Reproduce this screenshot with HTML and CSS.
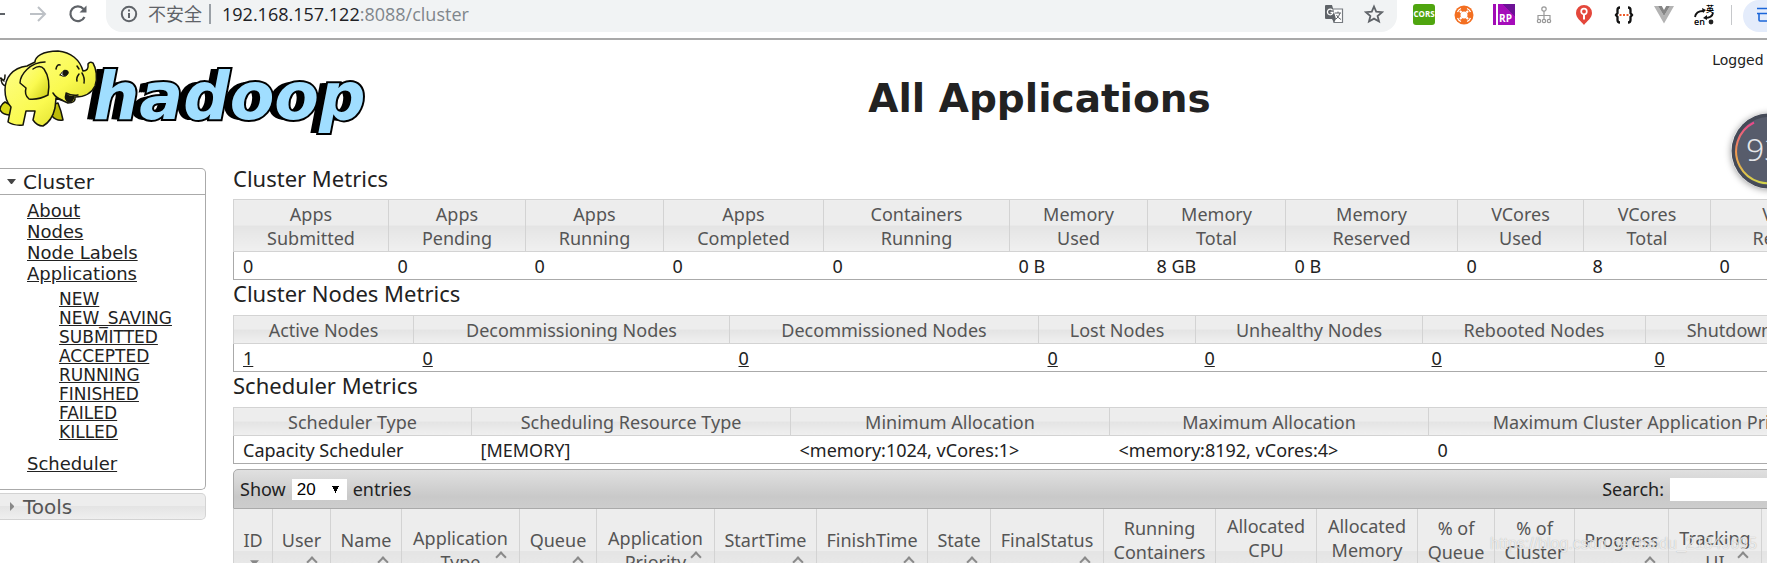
FILE: index.html
```html
<!DOCTYPE html>
<html lang="en">
<head>
<meta charset="utf-8">
<title>All Applications</title>
<link rel="stylesheet" href="styles.css">
</head>
<body>
<header class="toolbar">
  <button class="tool" aria-label="Back"><svg width="22" height="22" viewBox="0 0 22 22" fill="none" stroke="#5f6368" stroke-width="2"><path d="M19 11H4M11 4L4 11L11 18"/></svg></button>
  <button class="tool" aria-label="Forward"><svg width="22" height="22" viewBox="0 0 22 22" fill="none" stroke="#bdc1c6" stroke-width="2"><path d="M3 11H18M11 4L18 11L11 18"/></svg></button>
  <button class="tool" aria-label="Reload"><svg width="22" height="22" viewBox="0 0 22 22"><path d="M17.500 14A7.400 7.400 0 1 1 16.500 6" fill="none" stroke="#5f6368" stroke-width="2.200"/><path d="M19.500 2.500V9.500H12.500z" fill="#5f6368"/></svg></button>
  <div class="omnibox">
    <svg width="18" height="18" viewBox="0 0 18 18"><circle cx="9" cy="9" r="7.200" fill="none" stroke="#5f6368" stroke-width="2"/><path d="M9 8V13M9 4.500V6.500" stroke="#5f6368" stroke-width="2"/></svg>
    <span class="unsafe">不安全</span>
    <span class="divider"></span>
    <span class="url">192.168.157.122<span class="path">:8088/cluster</span></span>
    <svg class="translate" width="20" height="20" viewBox="0 0 20 20"><path d="M8 5H18.500V18.500H10z" fill="#fff" stroke="#777b80" stroke-width="1.200"/><path d="M2 1H8L12 15H2Q1 15 1 14V2Q1 1 2 1z" fill="#5f6368"/><path d="M8 15H12L10 18.500z" fill="#5f6368"/><path d="M8.500 6.300A2.800 2.800 0 1 0 9 8.500H6.500" fill="none" stroke="#fff" stroke-width="1.300"/><path d="M11 9H17M14 7.500V9M16 9Q15 13 12 15M12.500 11Q14 14 17 15.500" fill="none" stroke="#5f6368" stroke-width="1"/></svg>
    <svg width="20" height="20" viewBox="0 0 20 20"><path d="M10 2.500L12.200 7.700L18 8.200L13.600 12L15 17.500L10 14.600L5 17.500L6.400 12L2 8.200L7.800 7.700z" fill="none" stroke="#5f6368" stroke-width="1.800"/></svg>
  </div>
  <div class="extensions">
    <span class="cors">CORS</span>
    <svg width="22" height="22" viewBox="0 0 22 22"><circle cx="11" cy="11" r="9.500" fill="#f36f21"/><circle cx="11" cy="11" r="3.500" fill="#fff"/><path d="M4.500 8Q5.500 5.500 8 4.500M14 4.500Q16.500 5.500 17.500 8M17.500 14Q16.500 16.500 14 17.500M8 17.500Q5.500 16.500 4.500 14" stroke="#fff" stroke-width="1.300" fill="none"/><path d="M7 7L8.500 8.500M15 7L13.500 8.500M15 15L13.500 13.500M7 15L8.500 13.500" stroke="#fff" stroke-width="2.200"/></svg>
    <span class="rp">RP</span>
    <svg width="22" height="22" viewBox="0 0 22 22" fill="none" stroke="#999" stroke-width="1.200"><circle cx="11" cy="5" r="2.200"/><path d="M11 7V15M5 15V11.500H17V15"/><circle cx="6" cy="17" r="1.700"/><circle cx="11" cy="17" r="1.700"/><circle cx="16" cy="17" r="1.700"/></svg>
    <svg width="22" height="22" viewBox="0 0 22 22"><path d="M11 1A8 8 0 0 1 19 9C19 14 14 17 11 21C8 17 3 14 3 9A8 8 0 0 1 11 1z" fill="#e4473b"/><circle cx="11" cy="7.500" r="2.800" fill="none" stroke="#fff" stroke-width="1.700"/><path d="M11 10V15.500" stroke="#fff" stroke-width="2"/></svg>
    <svg width="22" height="22" viewBox="0 0 22 22"><path d="M7 3.500Q4.500 3.500 4.500 6V9L3 11L4.500 13V16Q4.500 18.500 7 18.500M15 3.500Q17.500 3.500 17.500 6V9L19 11L17.500 13V16Q17.500 18.500 15 18.500" fill="none" stroke="#111" stroke-width="2.300"/><path d="M6.500 11H16" stroke="#f05a28" stroke-width="2" stroke-dasharray="2 1.500"/></svg>
    <svg width="22" height="22" viewBox="0 0 22 22"><path d="M1 2H5L11 12L17 2H21L11 19.500z" fill="#b3b3b3"/><path d="M5 2H8.800L11 6L13.200 2H17L11 12z" fill="#858585"/></svg>
    <svg width="22" height="22" viewBox="0 0 22 22"><path d="M2 13Q3 7 10 7M20 9Q19 14 12 14" fill="none" stroke="#111" stroke-width="1.800"/><path d="M9 4L13 6L10 9zM14 11L10 14L14 16z" fill="#111"/><text x="1" y="21" font-family="Open Sans, sans-serif" font-size="9" font-weight="600">en</text><text x="13" y="8" font-family="Noto Sans CJK SC, sans-serif" font-size="8" font-weight="700">英</text><circle cx="18" cy="18" r="2.400" fill="#222"/></svg>
  </div>
  <span class="separator"></span>
  <button class="profile" aria-label="Profile"><svg width="22" height="22" viewBox="0 0 22 22"><path d="M22 3.500H2M2 8.500H22M4 8V15Q4 16 5 16H22" fill="none" stroke="#1a66d9" stroke-width="1.600"/></svg></button>
</header>

<div class="page">
  <div class="banner">
    <a class="logo" href="#" aria-label="hadoop">
      <svg class="elephant" width="98" height="80" viewBox="0 0 98 80" stroke="#16160c" stroke-width="1.500" stroke-linejoin="round" stroke-linecap="round">
        <defs><linearGradient id="hide" x1="0" y1="0" x2="1" y2="1"><stop offset="0" stop-color="#ffff91"/><stop offset=".55" stop-color="#fafa50"/><stop offset="1" stop-color="#cccb13"/></linearGradient></defs>
        <path d="M6 37Q1 36 1 29Q5 34 5 26M0 29L4 32" fill="none"/>
        <path d="M5 53Q0 56 0 61Q3 66 9 66L14 58z" fill="#d9d817"/>
        <path d="M51 56Q55 62 52 67Q56 72 63 71Q61 61 58 54z" fill="#bdbb08"/>
        <path d="M27 17C12 19 5 29 5 41C5 49 7 54 11 58L8 73Q14 77 23 76L26 62H35L33 71Q37 77 43 77Q52 72 55 59L56 49Q64 52 68 54Q76 54 75 48Q90 48 95 37C98 29 96 19 93 14Q90 12 88 15Q89 22 83 22C80 11 71 3 58 2C42 2 35 8 35 13z" fill="url(#hide)"/>
        <path d="M45 13C30 13 20 26 20 34L26 39Q24 46 29 50Q39 51 48 46Q51 30 44 20Q40 15 33 20" fill="url(#hide)"/>
        <path d="M53 44Q56 49 62 51M56 20Q57 15 60 16M82 24Q85 29 84 34M79 25Q76 29 77 32M79 20L77 17M66 44Q72 47 78 46" fill="none"/>
        <path d="M60 26Q65 18 68 23Q67 30 60 26" fill="#fff" stroke-width="1"/><path d="M64 22Q68 21 68 24Q65 28 63 25zM66 45Q70 49 74 47Q73 53 69 53Q64 51 66 45" fill="#16160c"/>
      </svg>
      <span class="wordmark">hadoop</span>
    </a>
    <h1>All Applications</h1>
    <div class="login">Logged in as: dr.who</div>
  </div>

  <div class="columns">
    <nav class="sidebar">
      <h3 class="section open"><svg width="10" height="10" viewBox="0 0 10 10"><path d="M0 2H9L5 7H4z" fill="#454545"/></svg><a href="#">Cluster</a></h3>
      <div class="menu">
        <ul>
          <li><a href="#">About</a></li>
          <li><a href="#">Nodes</a></li>
          <li><a href="#">Node Labels</a></li>
          <li><a href="#">Applications</a>
            <ul class="states">
              <li><a href="#">NEW</a></li>
              <li><a href="#">NEW_SAVING</a></li>
              <li><a href="#">SUBMITTED</a></li>
              <li><a href="#">ACCEPTED</a></li>
              <li><a href="#">RUNNING</a></li>
              <li><a href="#">FINISHED</a></li>
              <li><a href="#">FAILED</a></li>
              <li><a href="#">KILLED</a></li>
            </ul>
          </li>
          <li><a href="#">Scheduler</a></li>
        </ul>
      </div>
      <h3 class="section closed"><svg width="10" height="10" viewBox="0 0 10 10"><path d="M3 0L7 4V5L3 9z" fill="#888"/></svg><a href="#">Tools</a></h3>
    </nav>

    <main>
      <h2>Cluster Metrics</h2>
      <table class="metrics cluster">
        <colgroup><col><col><col><col><col><col><col><col><col><col><col></colgroup>
        <thead><tr><th>Apps<br>Submitted</th><th>Apps<br>Pending</th><th>Apps<br>Running</th><th>Apps<br>Completed</th><th>Containers<br>Running</th><th>Memory<br>Used</th><th>Memory<br>Total</th><th>Memory<br>Reserved</th><th>VCores<br>Used</th><th>VCores<br>Total</th><th>VCores<br>Reserved</th></tr></thead>
        <tbody><tr><td>0</td><td>0</td><td>0</td><td>0</td><td>0</td><td>0 B</td><td>8 GB</td><td>0 B</td><td>0</td><td>8</td><td>0</td></tr></tbody>
      </table>
      <h2>Cluster Nodes Metrics</h2>
      <table class="metrics nodes">
        <colgroup><col><col><col><col><col><col><col></colgroup>
        <thead><tr><th>Active Nodes</th><th>Decommissioning Nodes</th><th>Decommissioned Nodes</th><th>Lost Nodes</th><th>Unhealthy Nodes</th><th>Rebooted Nodes</th><th>Shutdown Nodes</th></tr></thead>
        <tbody><tr><td><a href="#">1</a></td><td><a href="#">0</a></td><td><a href="#">0</a></td><td><a href="#">0</a></td><td><a href="#">0</a></td><td><a href="#">0</a></td><td><a href="#">0</a></td></tr></tbody>
      </table>
      <h2>Scheduler Metrics</h2>
      <table class="metrics scheduler">
        <colgroup><col><col><col><col><col></colgroup>
        <thead><tr><th>Scheduler Type</th><th>Scheduling Resource Type</th><th>Minimum Allocation</th><th>Maximum Allocation</th><th>Maximum Cluster Application Priority</th></tr></thead>
        <tbody><tr><td>Capacity Scheduler</td><td>[MEMORY]</td><td>&lt;memory:1024, vCores:1&gt;</td><td>&lt;memory:8192, vCores:4&gt;</td><td>0</td></tr></tbody>
      </table>

      <div class="controls">
        <label>Show <select><option>10</option><option selected>20</option><option>50</option></select> entries</label>
        <label class="search">Search: <input type="text"></label>
      </div>
      <table class="apps">
        <colgroup><col><col><col><col><col><col><col><col><col><col><col><col><col><col><col><col><col><col></colgroup>
        <thead><tr>
          <th>ID<i class="sort down"></i></th>
          <th>User<i class="sort"></i></th>
          <th>Name<i class="sort"></i></th>
          <th class="wrap">Application<br>Type<i class="sort"></i></th>
          <th>Queue<i class="sort"></i></th>
          <th class="wrap">Application<br>Priority<i class="sort"></i></th>
          <th>StartTime<i class="sort"></i></th>
          <th>FinishTime<i class="sort"></i></th>
          <th>State<i class="sort"></i></th>
          <th>FinalStatus<i class="sort"></i></th>
          <th>Running<br>Containers<i class="sort"></i></th>
          <th>Allocated<br>CPU<br>VCores</th>
          <th>Allocated<br>Memory<br>MB</th>
          <th>% of<br>Queue<i class="sort"></i></th>
          <th>% of<br>Cluster<i class="sort"></i></th>
          <th>Progress<i class="sort"></i></th>
          <th class="wrap">Tracking<br>UI<i class="sort"></i></th>
          <th>Blacklisted<br>Nodes<i class="sort"></i></th>
        </tr></thead>
      </table>
    </main>
  </div>
</div>

<div class="gauge"><svg width="76" height="76" viewBox="0 0 76 76"><defs><linearGradient id="ring" x1="0" y1="0" x2="0" y2="1"><stop offset="0" stop-color="#e8478b"/><stop offset=".5" stop-color="#f39b50"/><stop offset="1" stop-color="#d3d44a"/></linearGradient></defs><circle cx="38" cy="38" r="37.500" fill="#454a57"/><circle cx="38" cy="38" r="34" fill="#575c6b"/><path d="M23 9.500A32 32 0 1 0 53 66" fill="none" stroke="url(#ring)" stroke-width="2"/></svg><span>93</span></div>
<div class="watermark">https://blog.csdn.net/baidu_21849695</div>
</body>
</html>
```
FILE: styles.css
```css
* { box-sizing: border-box; }
html, body { height: 100%; }
body {
  margin: 0;
  position: relative;
  overflow: hidden;
  background: #fff;
  color: #222;
  font-family: "Noto Sans", "Noto Sans CJK SC", sans-serif;
  font-size: 18px;
  line-height: 24px;
}
a { color: inherit; }
button { border: 0; padding: 0; background: none; }
svg { display: block; flex: none; }

/* browser toolbar */
.toolbar {
  display: flex;
  align-items: flex-start;
  height: 40px;
  border-bottom: 2px solid #a9a9a9;
  font-family: "Open Sans", "Noto Sans CJK SC", sans-serif;
}
.tool { width: 40px; height: 28px; flex: none; display: grid; place-items: center; }
.tool:first-child { width: 18px; justify-content: end; padding-right: 10px; }
.tool:nth-child(3) { margin-right: 8px; }
.omnibox {
  flex: 1;
  height: 32px;
  padding: 0 13px 4px 14px;
  display: flex;
  align-items: center;
  background: #f1f3f4;
  border-radius: 0 0 16px 16px;
}
.unsafe { margin-left: 10px; color: #5f6368; white-space: nowrap; }
.divider { width: 2px; height: 20px; margin: 0 11px 0 7px; background: #9aa0a6; }
.url { flex: 1; color: #202124; }
.path { color: #80868b; }
.translate { margin-right: 20px; }
.extensions { display: flex; align-items: center; gap: 18px; height: 29px; margin-left: 16px; }
.cors, .rp {
  width: 22px;
  height: 21px;
  color: #fff;
  font-size: 8px;
  font-weight: 700;
  line-height: 20px;
  text-align: center;
  background: #4fa50f;
  border-radius: 3px;
}
.rp {
  padding: 4px 0 0 3px;
  font-size: 10px;
  border-radius: 0;
  background: linear-gradient(90deg, #a10cb5 3px, #fff 3px, #fff 5px, transparent 5px), linear-gradient(225deg, #6d1296 30%, #a50cba 30%);
}
.separator { width: 1px; height: 20px; margin: 5px 11px 0 16px; background: #c6c8cb; }
.profile { width: 24px; height: 32px; padding-left: 12px; background: #e4ecfb; border-radius: 16px 0 0 16px; overflow: hidden; }

/* page, wider than the window */
.page { width: 106%; }
.banner, .columns { display: grid; grid-template-columns: 206px minmax(0, 1fr); align-items: start; }
.banner { height: 128px; }
.columns { column-gap: 27px; }
.logo { display: flex; width: max-content; padding-top: 9px; color: #a0deff; text-decoration: none; }
.elephant { position: relative; z-index: 1; }
.wordmark {
  margin-left: -5px;
  font: italic bold 65px/96px "DejaVu Sans", sans-serif;
  -webkit-text-stroke: 4px #000;
  paint-order: stroke fill;
  text-shadow: -2px 0 #000, -4px 0 #000, -6px 0 #000, -8px 0 #000;
}
h1, .login { grid-area: 1 / 2; }
h1 { margin: 0; padding-top: 35px; text-align: center; font: bold 39px/48px Verdana, "DejaVu Sans", sans-serif; }
.login { padding: 10px 16px 0 0; text-align: right; font: 14px/20px Verdana, "DejaVu Sans", sans-serif; }

/* sidebar */
.sidebar { font-family: Verdana, "DejaVu Sans", sans-serif; }
.section {
  display: flex;
  align-items: center;
  gap: 6px;
  height: 27px;
  margin: 0;
  padding-left: 7px;
  border: 1px solid #aaa;
  border-left: 0;
  border-radius: 0 5px 0 0;
  font-size: 20px;
  font-weight: 400;
}
.section a { text-decoration: none; }
.closed {
  margin-top: 3px;
  color: #555;
  border-color: #d3d3d3;
  border-radius: 0 5px 5px 0;
  background: linear-gradient(#ededed 50%, #e4e4e4 50%, #efefef);
}
.menu { padding: 5px 0 15px 27px; border: 1px solid #aaa; border-width: 0 1px 1px 0; border-radius: 0 0 5px 0; }
.menu ul { margin: 0; padding: 0; list-style: none; font-size: 18px; line-height: 21px; }
.menu .states { padding: 6px 0 11px 32px; font-size: 17px; line-height: 19px; }

/* tables */
main { overflow: hidden; }
h2 { margin: 0; height: 35px; font-size: 22px; font-weight: 400; line-height: 26px; }
h2:first-child { height: 31px; line-height: 20px; }
table { width: 100%; table-layout: fixed; border-collapse: collapse; }
th {
  padding: 2px 0 1px;
  font-weight: 400;
  color: #555;
  border: 1px solid #d3d3d3;
  background: linear-gradient(#ededed 50%, #e4e4e4 50%, #f0f0f0);
}
td { padding: 2px 9px 1px; }
.metrics tbody { border: 1px solid #aaa; border-top-color: #d3d3d3; }

.cluster col:nth-child(1) { width: 155px; }
.cluster col:nth-child(2) { width: 137px; }
.cluster col:nth-child(3) { width: 138px; }
.cluster col:nth-child(4) { width: 160px; }
.cluster col:nth-child(5) { width: 186px; }
.cluster col:nth-child(6) { width: 138px; }
.cluster col:nth-child(7) { width: 138px; }
.cluster col:nth-child(8) { width: 172px; }
.cluster col:nth-child(9) { width: 126px; }
.cluster col:nth-child(10) { width: 127px; }

.nodes col:nth-child(1) { width: 180px; }
.nodes col:nth-child(2) { width: 316px; }
.nodes col:nth-child(3) { width: 309px; }
.nodes col:nth-child(4) { width: 157px; }
.nodes col:nth-child(5) { width: 227px; }
.nodes col:nth-child(6) { width: 223px; }

.scheduler col:nth-child(1) { width: 238px; }
.scheduler col:nth-child(n+2) { width: 319px; }
.scheduler col:nth-child(5) { width: auto; }

/* application list */
.controls {
  display: flex;
  justify-content: space-between;
  align-items: center;
  height: 40px;
  margin-top: 5px;
  padding: 0 6px;
  border: 1px solid #aaa;
  border-radius: 5px 5px 0 0;
  background: linear-gradient(#e0e0e0, #c9c9c9 70%, #cdcdcd);
}
.controls label { display: flex; align-items: center; gap: 6px; }
select {
  appearance: none;
  width: 55px;
  height: 21px;
  padding: 0 5px;
  border: 0;
  font: 17px "Liberation Sans", Arial, sans-serif;
  background: #fff conic-gradient(from -27deg at 50% 100%, #000 54deg, transparent 0) no-repeat 40px 7px / 7px 7px;
}
.search input { width: 196px; height: 23px; padding: 0; border: 0; background: #fff; }
.apps th { height: 83px; padding: 0; border-top: 0; position: relative; }
.sort { display: block; height: 20px; margin-right: 14px; }
.sort::before, .sort::after {
  content: "";
  display: block;
  position: relative;
  top: 6px;
  width: 6px;
  height: 6px;
  margin-left: auto;
  border: solid #8a8a8a;
  border-width: 2px 0 0 2px;
  transform: rotate(45deg);
}
.sort::after { transform: rotate(225deg); }
.down::before { width: 9px; height: 5px; margin-right: -1px; border: 0; background: #888; clip-path: polygon(0 0, 100% 0, 50% 100%); transform: none; top: 8px; }
.down::after { display: none; }
.wrap .sort { position: absolute; right: 0; bottom: 25px; }

.apps col:nth-child(1) { width: 39px; }
.apps col:nth-child(2) { width: 58px; }
.apps col:nth-child(3) { width: 71px; }
.apps col:nth-child(4) { width: 118px; }
.apps col:nth-child(5) { width: 77px; }
.apps col:nth-child(6) { width: 118px; }
.apps col:nth-child(7) { width: 102px; }
.apps col:nth-child(8) { width: 111px; }
.apps col:nth-child(9) { width: 63px; }
.apps col:nth-child(10) { width: 113px; }
.apps col:nth-child(11) { width: 112px; }
.apps col:nth-child(12) { width: 101px; }
.apps col:nth-child(13) { width: 101px; }
.apps col:nth-child(14) { width: 77px; }
.apps col:nth-child(15) { width: 80px; }
.apps col:nth-child(16) { width: 94px; }
.apps col:nth-child(17) { width: 93px; }

/* overlays */
.gauge { position: absolute; top: 113px; right: -40px; border-radius: 50%; box-shadow: 0 1px 7px rgba(0, 0, 0, .4); }
.gauge span { position: absolute; left: 15px; top: 19px; color: #e4e6ea; font-size: 32px; line-height: 34px; font-weight: 300; }
.watermark { position: absolute; right: 10px; bottom: 9px; color: rgba(255, 255, 255, .75); font: 16px/20px "Liberation Sans", Arial, sans-serif; text-shadow: 0 0 1px rgba(0, 0, 0, .3); }
```
